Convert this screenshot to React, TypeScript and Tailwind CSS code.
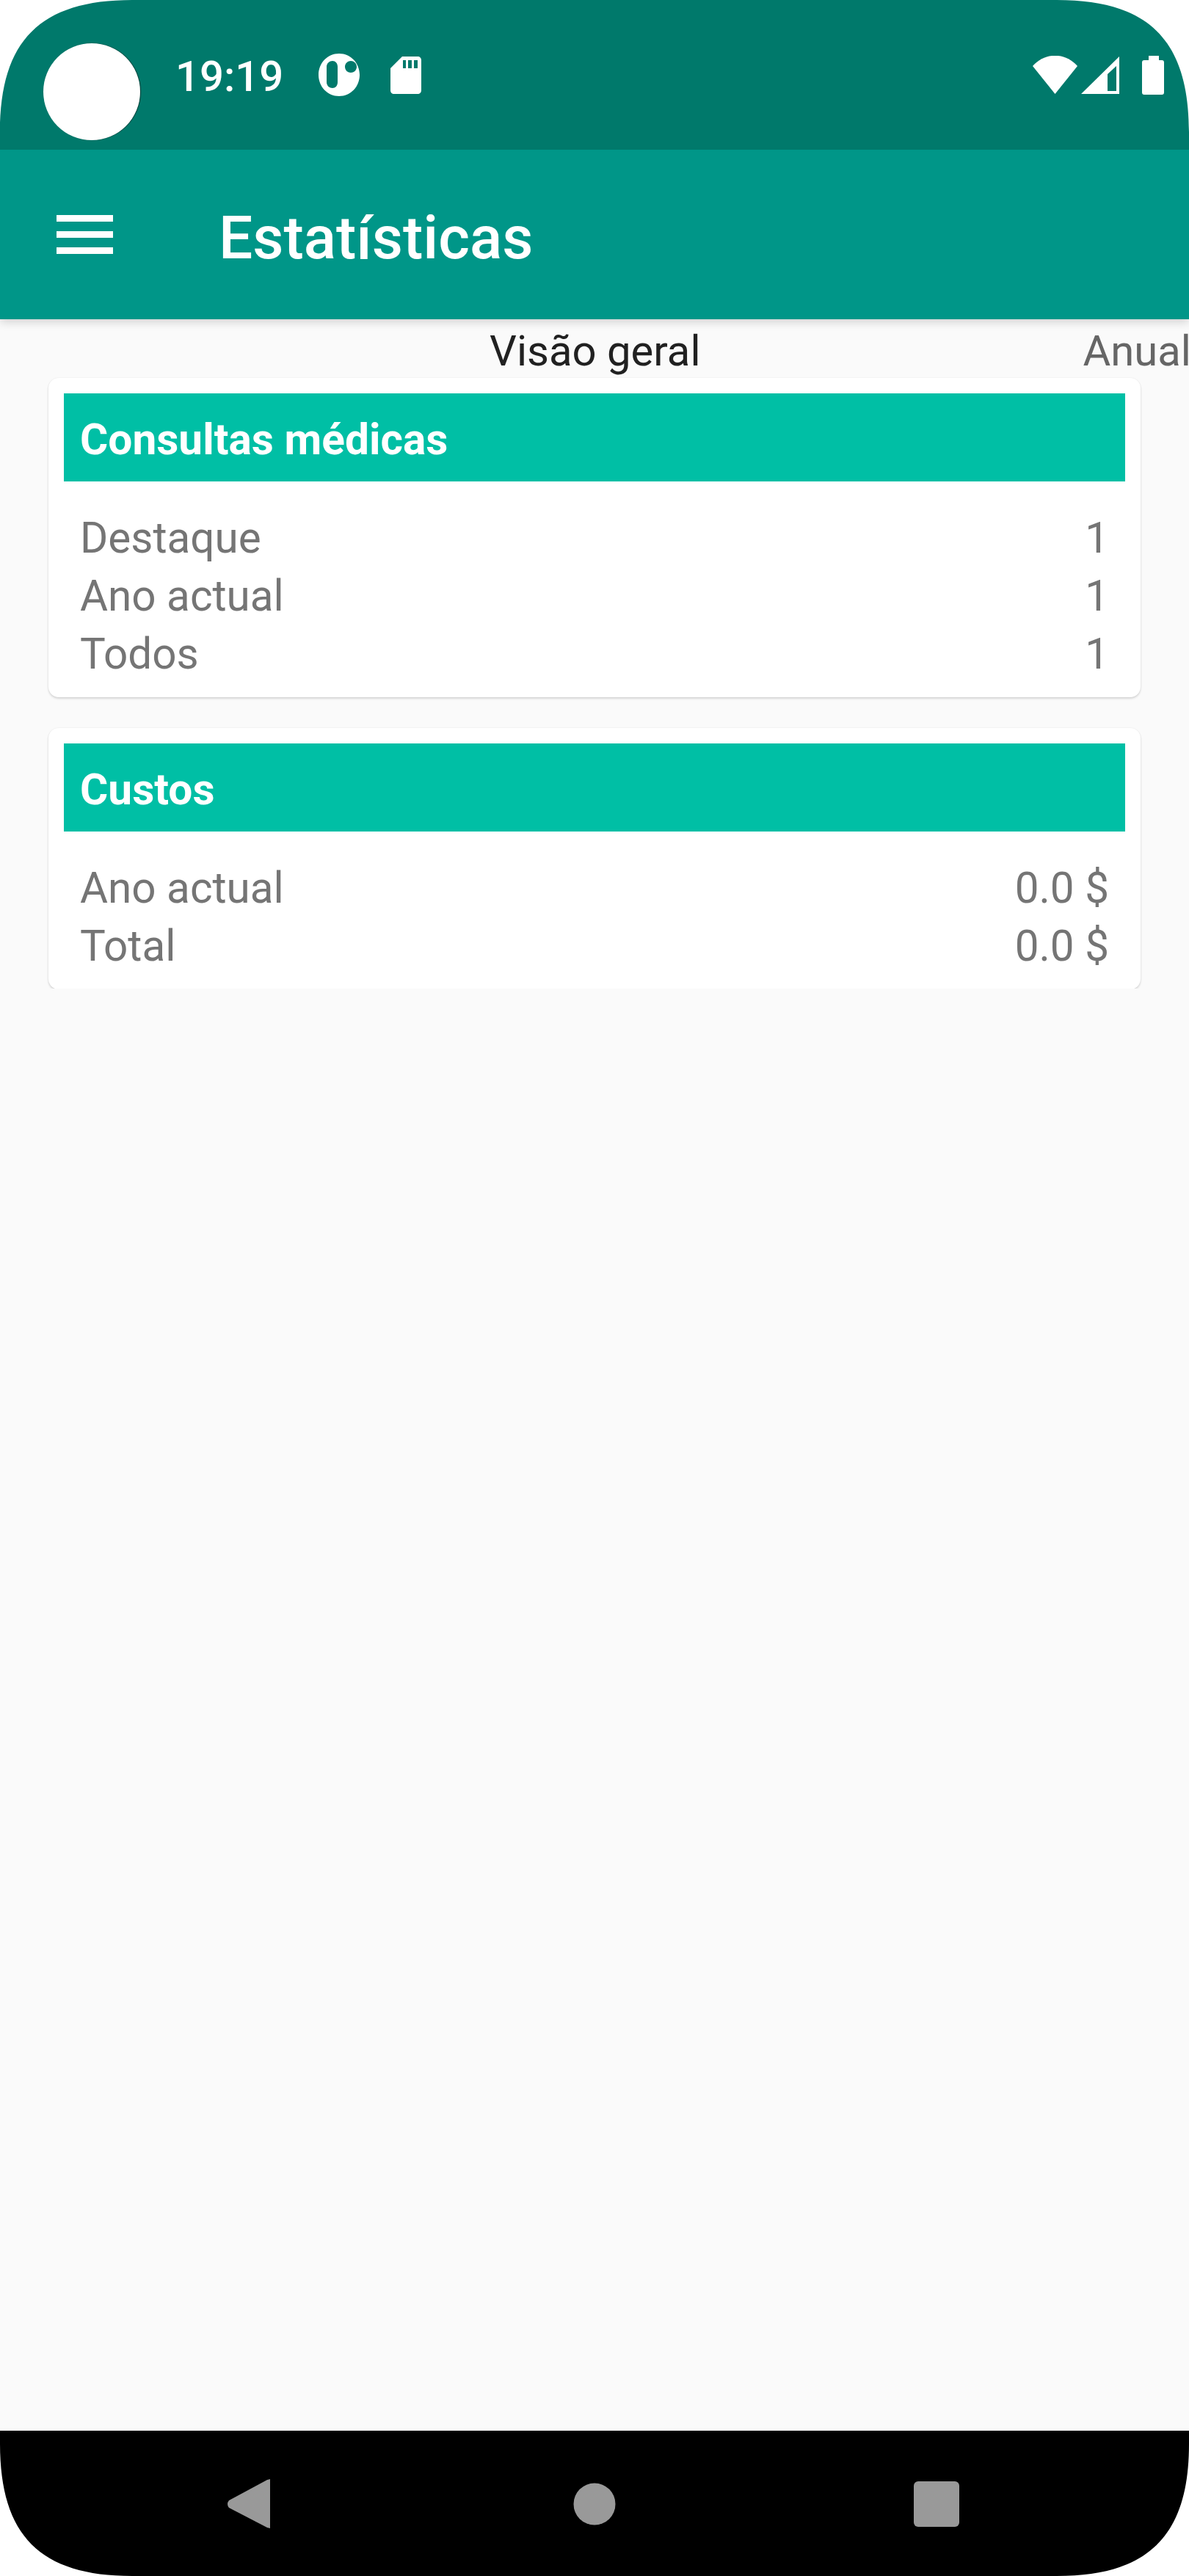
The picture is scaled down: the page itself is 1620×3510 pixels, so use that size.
const overview = [
  { label: "Destaque", value: "1" },
  { label: "Ano actual", value: "1" },
  { label: "Todos", value: "1" },
];

const costs = [
  { label: "Ano actual", value: "0.0 $" },
  { label: "Total", value: "0.0 $" },
];

function StatCard({ title, rows }: { title: string; rows: { label: string; value: string }[] }) {
  return (
    <section className="rounded-[14px] bg-white px-[21px] pt-[21px] pb-[19px] shadow-[0_2px_3px_rgba(0,0,0,0.14),0_0_2px_rgba(0,0,0,0.08)]">
      <h2 className="flex h-[120px] items-center bg-[#00BFA5] px-[22px] pt-[6px] text-[58.6px] leading-none font-bold text-white">
        {title}
      </h2>
      <div className="mt-[38px] px-[22px]">
        {rows.map((row) => (
          <div key={row.label} className="flex justify-between text-[58.4px] leading-[79px] text-[#757575]">
            <span>{row.label}</span>
            <span>{row.value}</span>
          </div>
        ))}
      </div>
    </section>
  );
}

function Corner({ className }: { className: string }) {
  return (
    <svg viewBox="0 0 180 180" className={`absolute z-20 h-[180px] w-[180px] ${className}`}>
      <path d="M0 0H180C55 0 0 55 0 180Z" fill="#fff" />
    </svg>
  );
}

export default function App() {
  return (
    <div className="relative flex h-[3510px] w-[1620px] flex-col overflow-hidden bg-[#FAFAFA] font-['Roboto',sans-serif]">
      <header className="relative z-10 shrink-0 shadow-[0_4px_12px_rgba(0,0,0,0.16)]">
        <div className="relative flex h-[204px] items-center bg-[#00796B] text-white">
          <div className="mt-[46px] ml-[59px] h-[132px] w-[132px] rounded-full bg-white shadow-[1px_0_1px_rgba(0,0,0,0.5)]" />
          <span className="mt-[4px] ml-[48px] text-[58px] leading-none font-medium">19:19</span>
          <svg viewBox="0 0 56 58" className="ml-[48px] h-[58px] w-[56px]">
            <path
              fillRule="evenodd"
              fill="#fff"
              d="M28 0C44 0 56 13 56 29S44 58 28 58 0 45 0 29 12 0 28 0ZM19 10C15 10 11 13 11 18V39C11 44 15 47 19 47S26 44 26 39V18C26 13 23 10 19 10ZM36 18C36 23 40 26 44 26S52 23 52 18 48 10 44 10 36 13 36 18Z"
            />
          </svg>
          <svg viewBox="0 0 42 51" className="ml-[42px] h-[51px] w-[42px]">
            <path
              fillRule="evenodd"
              fill="#fff"
              d="M16 0H37C40 0 42 2 42 5V46C42 49 40 51 37 51H5C2 51 0 49 0 46V16ZM17 5V16H21V5ZM24 5V16H29V5ZM32 5V16H37V5Z"
            />
          </svg>
          <div className="mr-[34px] ml-auto flex items-center">
            <svg viewBox="0 0 61 52" className="h-[52px] w-[61px]">
              <path fill="#fff" d="M0 14C17 -5 44 -5 61 14L30.5 52Z" />
            </svg>
            <svg viewBox="0 0 52 51" className="ml-[5px] h-[51px] w-[52px]">
              <path fillRule="evenodd" fill="#fff" d="M52 0V51H0ZM36 24L48 13V47H36Z" />
            </svg>
            <svg viewBox="0 0 30 53" className="ml-[31px] h-[53px] w-[30px]">
              <path fill="#fff" d="M9 0H23V6H27C29 6 30 7 30 9V50C30 52 29 53 27 53H3C1 53 0 52 0 50V9C0 7 1 6 3 6H9Z" />
            </svg>
          </div>
        </div>
        <div className="flex h-[231px] items-center bg-[#009688] text-white">
          <div className="ml-[77px] flex w-[77px] flex-col gap-[13px]">
            <div className="h-[9px] bg-white" />
            <div className="h-[9px] bg-white" />
            <div className="h-[9px] bg-white" />
          </div>
          <h1 className="mt-[8px] ml-[144px] text-[82px] leading-none font-medium">Estatísticas</h1>
        </div>
      </header>

      <main className="h-[912px] shrink-0 overflow-hidden">
        <div className="flex h-[80px] pt-[3px] pl-[667px] text-[58px] leading-[80px] whitespace-nowrap">
          <span className="text-[#212121]">Visão geral</span>
          <span className="ml-[521px] text-[#666666]">Anual</span>
        </div>
        <div className="mx-[66px] flex flex-col gap-[42px]">
          <StatCard title="Consultas médicas" rows={overview} />
          <StatCard title="Custos" rows={costs} />
        </div>
      </main>

      <nav className="mt-auto flex h-[198px] shrink-0 bg-black">
        <svg viewBox="0 0 1620 198" className="h-[198px] w-[1620px]" fill="#999">
          <path d="M368 66V133L364 132L312 105Q308 100 312 95L364 67Z" />
          <circle cx="810" cy="100" r="28.5" />
          <rect x="1245" y="69" width="62" height="62" rx="6" />
        </svg>
      </nav>

      <Corner className="top-0 left-0" />
      <Corner className="top-0 right-0 -scale-x-100" />
      <Corner className="bottom-0 left-0 -scale-y-100" />
      <Corner className="right-0 bottom-0 -scale-100" />
    </div>
  );
}
